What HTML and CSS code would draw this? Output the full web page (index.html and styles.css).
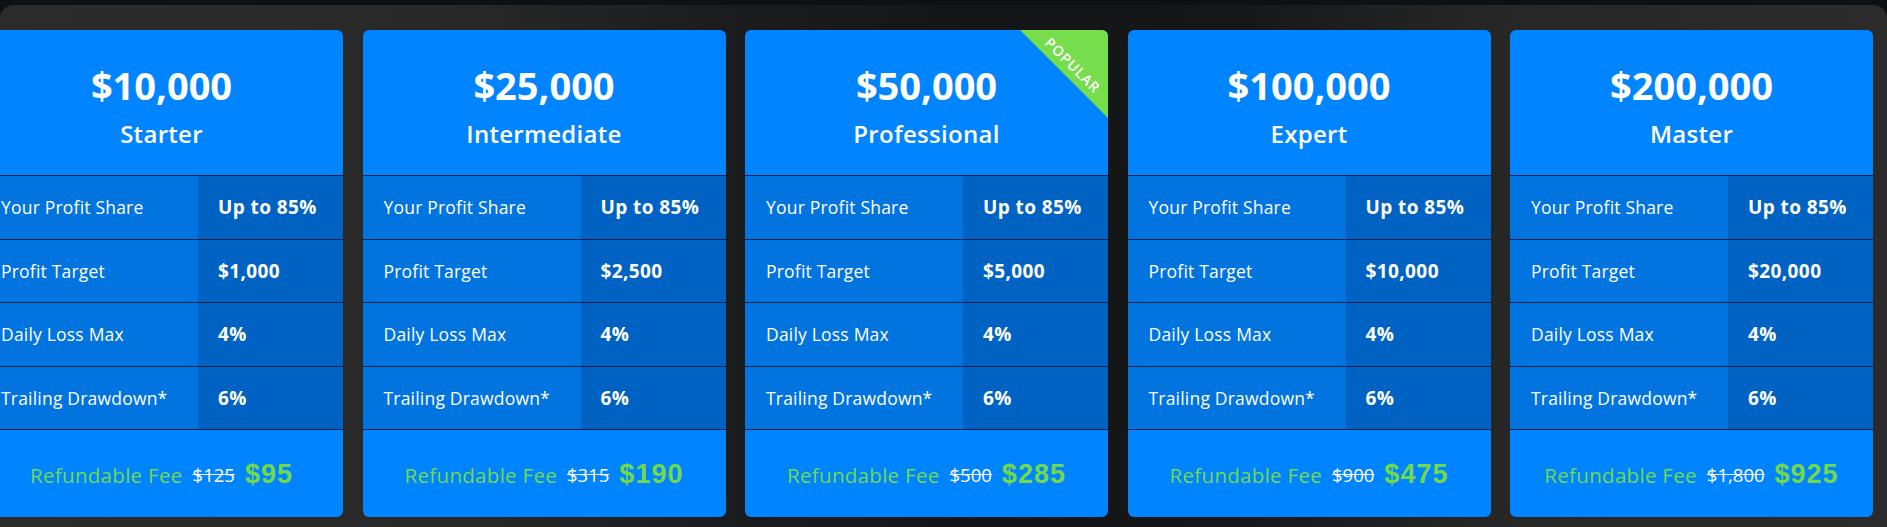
FILE: index.html
```html
<!DOCTYPE html>
<html>
<head>
<meta charset="utf-8">
<link rel="stylesheet" href="styles.css">
</head>
<body>
<div class="panel">
  <div class="cards">
    <div class="card">
      <div class="head"><div class="amount">$10,000</div><div class="plan">Starter</div></div>
      <div class="row"><div class="label">Your Profit Share</div><div class="value">Up to 85%</div></div>
      <div class="row"><div class="label">Profit Target</div><div class="value">$1,000</div></div>
      <div class="row"><div class="label">Daily Loss Max</div><div class="value">4%</div></div>
      <div class="row"><div class="label">Trailing Drawdown*</div><div class="value">6%</div></div>
      <div class="foot"><span class="fee">Refundable Fee</span><s class="old">$125</s><span class="new">$95</span></div>
    </div>
    <div class="card">
      <div class="head"><div class="amount">$25,000</div><div class="plan">Intermediate</div></div>
      <div class="row"><div class="label">Your Profit Share</div><div class="value">Up to 85%</div></div>
      <div class="row"><div class="label">Profit Target</div><div class="value">$2,500</div></div>
      <div class="row"><div class="label">Daily Loss Max</div><div class="value">4%</div></div>
      <div class="row"><div class="label">Trailing Drawdown*</div><div class="value">6%</div></div>
      <div class="foot"><span class="fee">Refundable Fee</span><s class="old">$315</s><span class="new">$190</span></div>
    </div>
    <div class="card">
      <div class="ribbon"><span>POPULAR</span></div>
      <div class="head"><div class="amount">$50,000</div><div class="plan">Professional</div></div>
      <div class="row"><div class="label">Your Profit Share</div><div class="value">Up to 85%</div></div>
      <div class="row"><div class="label">Profit Target</div><div class="value">$5,000</div></div>
      <div class="row"><div class="label">Daily Loss Max</div><div class="value">4%</div></div>
      <div class="row"><div class="label">Trailing Drawdown*</div><div class="value">6%</div></div>
      <div class="foot"><span class="fee">Refundable Fee</span><s class="old">$500</s><span class="new">$285</span></div>
    </div>
    <div class="card">
      <div class="head"><div class="amount">$100,000</div><div class="plan">Expert</div></div>
      <div class="row"><div class="label">Your Profit Share</div><div class="value">Up to 85%</div></div>
      <div class="row"><div class="label">Profit Target</div><div class="value">$10,000</div></div>
      <div class="row"><div class="label">Daily Loss Max</div><div class="value">4%</div></div>
      <div class="row"><div class="label">Trailing Drawdown*</div><div class="value">6%</div></div>
      <div class="foot"><span class="fee">Refundable Fee</span><s class="old">$900</s><span class="new">$475</span></div>
    </div>
    <div class="card">
      <div class="head"><div class="amount">$200,000</div><div class="plan">Master</div></div>
      <div class="row"><div class="label">Your Profit Share</div><div class="value">Up to 85%</div></div>
      <div class="row"><div class="label">Profit Target</div><div class="value">$20,000</div></div>
      <div class="row"><div class="label">Daily Loss Max</div><div class="value">4%</div></div>
      <div class="row"><div class="label">Trailing Drawdown*</div><div class="value">6%</div></div>
      <div class="foot"><span class="fee">Refundable Fee</span><s class="old">$1,800</s><span class="new">$925</span></div>
    </div>
  </div>
</div>
</body>
</html>
```

FILE: styles.css
```css
html, body {
  margin: 0;
  padding: 0;
}
body {
  background: #0d1114;
  font-family: "Open Sans", "Liberation Sans", sans-serif;
  overflow: hidden;
  height: 527px;
}
.panel {
  margin-top: 5px;
  height: 600px;
  border-radius: 14px 14px 0 0;
  background: linear-gradient(90deg, #2b2b2b 0%, #282828 25%, #1a1c1e 38%, #131517 52%, #151719 66%, #262626 78%, #2b2b2b 100%);
  padding-top: 25px;
}
.cards {
  display: flex;
  gap: 19.5px;
  margin-left: -20px;
}
.card {
  position: relative;
  flex: 0 0 363px;
  width: 363px;
  height: 487px;
  border-radius: 6px;
  overflow: hidden;
  background: #0084ff;
  display: flex;
  flex-direction: column;
}
.head {
  height: 145px;
  display: flex;
  flex-direction: column;
  align-items: center;
  color: #fff;
}
.amount {
  margin-top: 32px;
  font-size: 38px;
  font-weight: 700;
  line-height: 46px;
}
.plan {
  margin-top: 10px;
  font-size: 24px;
  font-weight: 600;
  letter-spacing: 0.3px;
  line-height: 32px;
}
.row {
  display: flex;
  height: 62.5px;
  border-top: 1px solid #0b1f45;
  color: #fff;
}
.label {
  flex: 0 0 218px;
  box-sizing: border-box;
  padding-left: 21px;
  background: #0274df;
  display: flex;
  align-items: center;
  font-size: 17.5px;
  font-weight: 500;
  letter-spacing: 0.2px;
  white-space: nowrap;
}
.value {
  flex: 1;
  box-sizing: border-box;
  padding-left: 20px;
  background: #0062c3;
  display: flex;
  align-items: center;
  font-size: 19px;
  font-weight: 700;
  letter-spacing: 0.4px;
  white-space: nowrap;
}
.foot {
  flex: 1;
  border-top: 1px solid #0b1f45;
  display: flex;
  align-items: center;
  justify-content: center;
  gap: 10px;
  padding-top: 2px;
}
.fee {
  color: #72d94a;
  font-size: 20.5px;
  font-weight: 500;
  letter-spacing: 0.3px;
}
.old {
  color: #fff;
  font-size: 18.5px;
  font-weight: 500;
}
.new {
  color: #72d94a;
  font-family: "Liberation Sans", Arial, sans-serif;
  font-size: 27px;
  font-weight: 700;
  letter-spacing: 1px;
}
.ribbon {
  position: absolute;
  top: 0;
  right: 0;
  width: 88px;
  height: 88px;
  background: #76dd4c;
  clip-path: polygon(0 0, 100% 0, 100% 100%);
}
.ribbon span {
  position: absolute;
  left: 53px;
  top: 35px;
  transform: translate(-50%, -50%) rotate(45deg);
  color: #fff;
  font-size: 14px;
  font-weight: 600;
  letter-spacing: 1px;
  white-space: nowrap;
}
```
